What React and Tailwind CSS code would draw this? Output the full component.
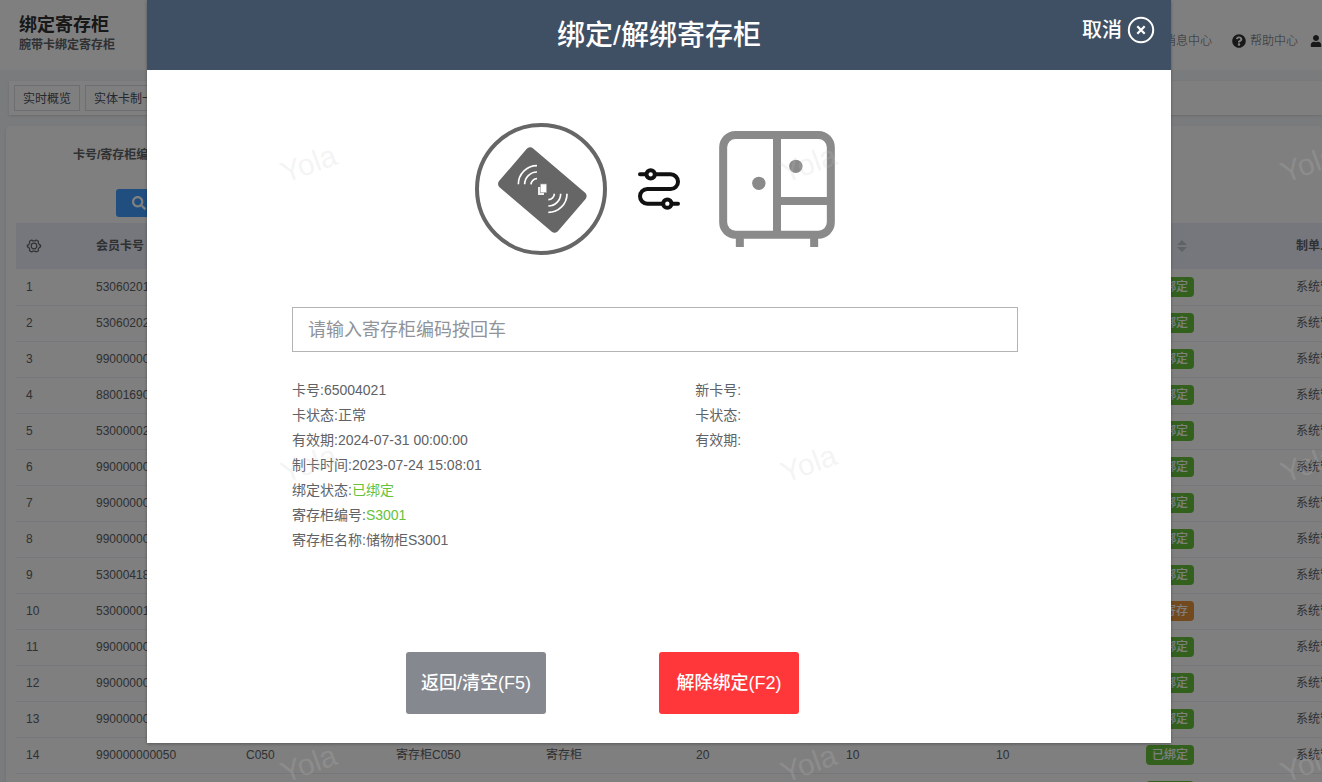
// Locker binding page - table of wristband cards with the bind / unbind dialog on top

import { useState } from 'react'
import { FaSearch, FaUser, FaQuestionCircle, FaBell } from 'react-icons/fa'

const tabs = ['实时概览', '实体卡制卡', '绑定寄存柜']

const columns = ['会员卡号', '寄存柜编号', '寄存柜名称', '类型', '押金', '可用次数', '已用次数', '状态', '制单人']

const cards = [
  { no: '530602010001', locker: 'C063' },
  { no: '530602020002', locker: 'C062' },
  { no: '990000000061', locker: 'C061' },
  { no: '880016900060', locker: 'C060' },
  { no: '530000020059', locker: 'C059' },
  { no: '990000000058', locker: 'C058' },
  { no: '990000000057', locker: 'C057' },
  { no: '990000000056', locker: 'C056' },
  { no: '530004180055', locker: 'C055' },
  { no: '530000010054', locker: 'C054', status: '已寄存' },
  { no: '990000000053', locker: 'C053' },
  { no: '990000000052', locker: 'C052' },
  { no: '990000000051', locker: 'C051' },
  { no: '990000000050', locker: 'C050' },
  { no: '990000000049', locker: 'C049' },
]

const cardInfo = [
  { label: '卡号', value: '65004021' },
  { label: '卡状态', value: '正常' },
  { label: '有效期', value: '2024-07-31 00:00:00' },
  { label: '制卡时间', value: '2023-07-24 15:08:01' },
  { label: '绑定状态', value: '已绑定', green: true },
  { label: '寄存柜编号', value: 'S3001', green: true },
  { label: '寄存柜名称', value: '储物柜S3001' },
]

const newCardInfo = [
  { label: '新卡号', value: '' },
  { label: '卡状态', value: '' },
  { label: '有效期', value: '' },
]

function CardIcon() {
  return (
    <svg viewBox="0 0 396 396" className="size-[132px]" fill="none">
      <circle cx="198" cy="198" r="192" stroke="#666" strokeWidth="12" />
      <rect x="86" y="124" width="232" height="154" rx="13" fill="#666" transform="rotate(40.5 202 201)" />
      <g stroke="#fff" strokeWidth="5">
        <path d="M186 128a56 56 0 0 0-56 56M186 147a37 37 0 0 0-37 37M186 167a18 18 0 0 0-18 17" />
        <path d="M220 268a56 56 0 0 0 56-56M220 249a37 37 0 0 0 37-37M220 230a18 18 0 0 0 18-18" />
      </g>
      <rect x="189" y="192" width="18" height="24" fill="#eee" />
      <rect x="196" y="183" width="19" height="26" fill="#fff" stroke="#999" strokeWidth="2" />
    </svg>
  )
}

function SwapIcon() {
  return (
    <svg viewBox="0 0 126 126" className="size-[42px]" fill="none" stroke="#111" strokeWidth="12" strokeLinecap="round">
      <path d="M6 19H98a22 22 0 0 1 0 44H28a22 22 0 0 0 0 44H120" />
      <circle cx="38" cy="19" r="12.5" fill="#fff" />
      <circle cx="88" cy="107" r="12.5" fill="#fff" />
    </svg>
  )
}

function LockerIcon() {
  return (
    <svg viewBox="0 0 347 348" className="size-[116px]" fill="none" stroke="#8a8a8a" strokeWidth="24">
      <rect x="12" y="12" width="323" height="299" rx="37" />
      <path d="M173.500 12V311M173.500 210H335M62 311V348M285 311V348" />
      <circle cx="119" cy="157" r="20" fill="#8a8a8a" stroke="none" />
      <circle cx="230" cy="106" r="20" fill="#8a8a8a" stroke="none" />
    </svg>
  )
}

function GearIcon() {
  return (
    <svg viewBox="0 0 16 16" className="size-4" fill="none" stroke="#606266" strokeWidth="1.2" strokeLinejoin="round">
      <path d="M5.800 2 6.600 2.800H9.400L10.200 2 12.500 3.300 12.200 4.700 13.500 6.900 14.600 7.200V8.800L13.500 9.100 12.200 11.300 12.500 12.700 10.200 14 9.400 13.200H6.600L5.800 14 3.500 12.700 3.800 11.300 2.500 9.100 1.400 8.800V7.200L2.500 6.900 3.800 4.700 3.500 3.300Z" />
      <circle cx="8" cy="8" r="2.8" />
    </svg>
  )
}

function SortIcon() {
  return (
    <svg viewBox="0 0 24 14" className="h-3.5 w-6" fill="#c0c4cc">
      <path d="M7 6 12 1 17 6ZM7 8H17L12 13Z" />
    </svg>
  )
}

function InfoList({ items }) {
  return (
    <ul className="text-sm leading-[25px] text-[#606266]">
      {items.map((item) => (
        <li key={item.label}>
          {item.label}:<span className={item.green ? 'text-[#67c23a]' : ''}>{item.value}</span>
        </li>
      ))}
    </ul>
  )
}

function Page() {
  return (
    <div className="h-screen overflow-hidden bg-[#f4f6fa] text-xs text-[#606266]">
      <header className="flex h-[70px] items-start justify-between bg-white pl-[19px]">
        <div className="pt-[13px]">
          <h1 className="text-lg leading-6 font-bold text-[#303133]">绑定寄存柜</h1>
          <p className="leading-4 font-bold">腕带卡绑定寄存柜</p>
        </div>
        <nav className="flex items-center gap-5 pt-[33px] leading-4 font-light">
          <a href="#" className="flex items-center gap-1">
            <FaBell className="size-3.5 text-[#303133]" />消息中心
          </a>
          <a href="#" className="flex items-center gap-1">
            <FaQuestionCircle className="size-3.5 text-[#303133]" />帮助中心
          </a>
          <a href="#" aria-label="user" className="-ml-2">
            <FaUser className="size-3 text-[#303133]" />
          </a>
        </nav>
      </header>

      <div className="mt-[11px] ml-[9px] flex gap-[5px] bg-white px-[5px] py-1 shadow">
        {tabs.map((tab) => (
          <button key={tab} className="h-[26px] border border-[#d8dce5] px-2 pt-0.5 text-[#495060]">{tab}</button>
        ))}
      </div>

      <main className="mt-[11px] ml-1.5 rounded bg-white pt-[13px] pl-2.5 shadow">
        <div className="flex h-8 items-center gap-3 pl-[57px]">
          <label htmlFor="keyword" className="font-bold">卡号/寄存柜编号</label>
          <input id="keyword" className="h-8 w-48 rounded border border-[#dcdfe6] px-3" />
        </div>
        <button className="mt-[18px] mb-1.5 ml-[100px] flex h-7 items-center gap-1 rounded-[3px] bg-[#409eff] px-4 text-white">
          <FaSearch className="size-3.5" />搜索
        </button>
        <div className="overflow-hidden">
          <table className="w-[1420px] table-fixed text-left">
            <thead className="bg-[#ebeef9]">
              <tr className="h-[46px]">
                <th className="w-[70px] px-2.5"><GearIcon /></th>
                {columns.map((col) => (
                  <th key={col} className="w-[150px] px-2.5 font-bold">
                    <span className="flex items-center">{col}{col === '状态' && <SortIcon />}</span>
                  </th>
                ))}
              </tr>
            </thead>
            <tbody>
              {cards.map((card, index) => (
                <tr key={card.no} className="h-9 border-b border-[#ebeef5]">
                  <td className="px-2.5">{index + 1}</td>
                  <td className="px-2.5">{card.no}</td>
                  <td className="px-2.5">{card.locker}</td>
                  <td className="px-2.5">寄存柜{card.locker}</td>
                  <td className="px-2.5">寄存柜</td>
                  <td className="px-2.5">20</td>
                  <td className="px-2.5">10</td>
                  <td className="px-2.5">10</td>
                  <td className="px-2.5">
                    <span className={`block h-5 w-12 rounded text-center leading-5 font-medium text-white ${card.status ? 'bg-[#e6953c]' : 'bg-[#67c23a]'}`}>
                      {card.status || '已绑定'}
                    </span>
                  </td>
                  <td className="px-2.5">系统管理员</td>
                </tr>
              ))}
            </tbody>
          </table>
        </div>
      </main>
    </div>
  )
}

function BindDialog() {
  const [code, setCode] = useState('')

  return (
    <div className="absolute inset-0 bg-black/50 pr-1">
      <section role="dialog" aria-labelledby="dialog-title" className="mx-auto w-full max-w-[1024px] bg-white shadow-[0_1px_3px_rgba(0,0,0,0.3)]">
        <div className="grid h-[70px] grid-cols-[1fr_auto_1fr] bg-[#405064] font-medium text-white">
          <h2 id="dialog-title" className="col-start-2 text-[28px] leading-[72px]">绑定/解绑寄存柜</h2>
          <button className="mt-4 mr-4 flex h-7 items-center gap-[5px] justify-self-end text-xl">
            取消
            <svg viewBox="0 0 28 28" className="size-7" fill="none" stroke="currentColor" strokeWidth="2">
              <circle cx="14" cy="14" r="12.2" />
              <path d="M10.300 10.300 17.700 17.700M17.700 10.300 10.300 17.700" strokeWidth="2.2" />
            </svg>
          </button>
        </div>

        <div className="pt-[53px] pr-[153px] pb-[29px] pl-[145px]">
          <div className="flex items-center justify-center">
            <CardIcon />
            <div className="mr-[39px] ml-[31px]"><SwapIcon /></div>
            <LockerIcon />
          </div>

          <input
            aria-label="寄存柜编码"
            placeholder="请输入寄存柜编码按回车"
            value={code}
            onChange={(e) => setCode(e.target.value)}
            className="mt-[52px] block h-[45px] w-full border border-[#b4b4b4] px-[15px] pt-0.5 text-lg text-[#606266] placeholder:text-[#909399]"
          />

          <div className="mt-[26px] grid grid-cols-[5fr_4fr]">
            <InfoList items={cardInfo} />
            <InfoList items={newCardInfo} />
          </div>

          <div className="mt-[99px] flex gap-[113px] pl-[114px] text-lg font-medium text-white">
            <button onClick={() => setCode('')} className="h-[62px] w-[140px] rounded-[3px] bg-[#868890]">返回/清空(F5)</button>
            <button className="h-[62px] w-[140px] rounded-[3px] bg-[#ff373b]">解除绑定(F2)</button>
          </div>
        </div>
      </section>
    </div>
  )
}

function Watermark() {
  return (
    <div className="pointer-events-none absolute inset-0 overflow-hidden" aria-hidden="true">
      <div className="ml-[59px] grid grid-cols-[500px_500px_500px] auto-rows-[300px]">
        {Array.from({ length: 9 }, (_, i) => (
          <div key={i} className="flex items-center justify-center pt-7">
            <span className="-rotate-20 text-3xl text-[#c8c8c8]/20">Yola</span>
          </div>
        ))}
      </div>
    </div>
  )
}

export default function App() {
  return (
    <div className="relative min-h-screen overflow-hidden font-['Liberation_Sans','Noto_Sans_CJK_SC',sans-serif]">
      <Page />
      <BindDialog />
      <Watermark />
    </div>
  )
}
